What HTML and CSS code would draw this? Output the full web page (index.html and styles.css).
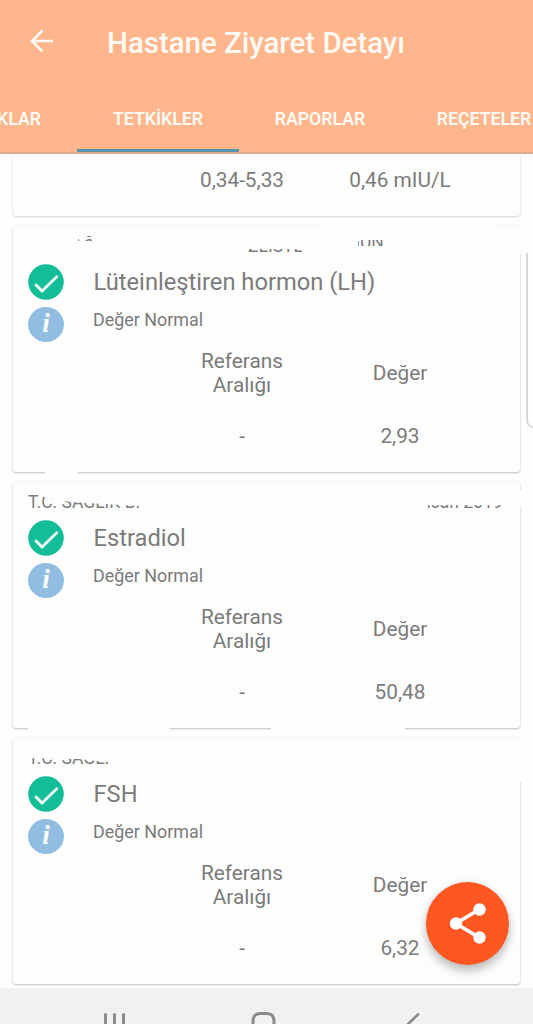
FILE: index.html
```html
<!DOCTYPE html>
<html lang="tr">
<head>
<meta charset="utf-8">
<title>Hastane Ziyaret Detayı</title>
<link rel="stylesheet" href="styles.css">
</head>
<body>
<div class="screen">
  <header class="appbar">
    <div class="toolbar">
      <svg class="back" viewBox="0 0 24 24" width="24" height="24"><path d="M24 12H3M13.500 1.500 3 12l10.500 10.500" fill="none" stroke="#fffaf3" stroke-width="2.700"/></svg>
      <h1 class="title">Hastane Ziyaret Detayı</h1>
    </div>
    <nav class="tabs">
      <span class="tab first">KLAR</span>
      <span class="tab active">TETKİKLER</span>
      <span class="tab">RAPORLAR</span>
      <span class="tab last">REÇETELER</span>
    </nav>
  </header>
  <main class="list">
    <section class="card partial">
      <div class="values"><span>0,34-5,33</span><span>0,46 mIU/L</span></div>
    </section>

    <section class="card lh">
      <div class="meta">
        <span class="frag frag-a">T.C. SAĞLIK</span><span class="frag frag-b">ZLISTL</span><span class="frag frag-c">GÜN</span>
      </div>
      <div class="result">
        <svg class="check" viewBox="0 0 36 36"><circle cx="18" cy="18" r="17.800"/><path d="M7.300 20.200 14 27 29.500 12"/></svg>
        <h2 class="name">Lüteinleştiren hormon (LH)</h2>
        <span class="info">i</span>
        <p class="status">Değer Normal</p>
      </div>
      <div class="heads"><span>Referans<br>Aralığı</span><span>Değer</span></div>
      <div class="values"><span>-</span><span>2,93</span></div>
      <i class="gap lh-top"></i><i class="gap lh-bottom"></i><i class="gap lh-side"></i>
    </section>

    <section class="card estradiol">
      <div class="meta">
        <span class="frag frag-d">T.C. SAĞLIK B.</span><span class="frag frag-e">Nisan 2019</span>
      </div>
      <div class="result">
        <svg class="check" viewBox="0 0 36 36"><circle cx="18" cy="18" r="17.800"/><path d="M7.300 20.200 14 27 29.500 12"/></svg>
        <h2 class="name">Estradiol</h2>
        <span class="info">i</span>
        <p class="status">Değer Normal</p>
      </div>
      <div class="heads"><span>Referans<br>Aralığı</span><span>Değer</span></div>
      <div class="values"><span>-</span><span>50,48</span></div>
      <i class="gap es-left"></i><i class="gap es-right"></i><i class="gap es-side"></i>
    </section>

    <section class="card fsh">
      <div class="meta">
        <span class="frag frag-f">T.C. SAĞLI</span>
      </div>
      <div class="result">
        <svg class="check" viewBox="0 0 36 36"><circle cx="18" cy="18" r="17.800"/><path d="M7.300 20.200 14 27 29.500 12"/></svg>
        <h2 class="name">FSH</h2>
        <span class="info">i</span>
        <p class="status">Değer Normal</p>
      </div>
      <div class="heads"><span>Referans<br>Aralığı</span><span>Değer</span></div>
      <div class="values"><span>-</span><span>6,32</span></div>
      <i class="gap fsh-side"></i>
    </section>
  </main>
  <footer class="navbar">
    <svg viewBox="0 0 533 36" width="533" height="36" fill="none" stroke="#8b8b8b" stroke-width="3" stroke-linecap="round"><path d="M105.500 26.500V40M114.500 26.500V40M123.500 26.500V40"/><path d="M253 40V33q0-7.500 7.500-7.500h6q7.500 0 7.500 7.500V40"/><path d="M418 26.500 404 40" stroke-width="2.600"/></svg>
  </footer>
  <div class="edge"></div>
  <div class="fab">
    <svg viewBox="0 0 83 83" width="83" height="83"><path d="M53 27.500 30 41.500l23 14" fill="none" stroke="#fff" stroke-width="3.600"/><g fill="#fff"><circle cx="53.500" cy="27.500" r="6.200"/><circle cx="30" cy="41.500" r="6.200"/><circle cx="53.500" cy="55.500" r="6.200"/></g></svg>
  </div>
</div>
</body>
</html>
```
FILE: styles.css
```css
* { box-sizing: border-box; margin: 0; padding: 0; }
body { font-family: Roboto, sans-serif; color: #7b7b7b; background: #fefefe; overflow: hidden; }
.screen { position: relative; width: 533px; height: 1024px; overflow: hidden; display: flex; flex-direction: column; }

.appbar { height: 154px; flex: none; background: #ffb68c; color: #fffaf3; border-bottom: 2px solid #dcaa8b; display: flex; flex-direction: column; }
.toolbar { height: 84px; display: flex; align-items: center; padding-left: 29px; gap: 54px; }
.title { font-size: 29.450px; font-weight: 500; line-height: 34px; white-space: nowrap; padding-top: 3px; }
.tabs { height: 70px; display: flex; margin-left: -85px; }
.tab { width: 162px; flex: none; text-align: center; font-size: 17.700px; font-weight: 600; line-height: 70px; height: 70px; padding-top: 2px; }
.tab.first { text-align: right; padding-right: 36px; }
.tab.last { padding-left: 4px; }
.tab.active { border-bottom: 3px solid #5594b1; }

.list { height: 834px; flex: none; padding: 0 13px; display: flex; flex-direction: column; gap: 10px; overflow: hidden; }
.card { position: relative; height: 246px; flex: none; background: #fdfdfd; border-radius: 3px; box-shadow: 0 1px 2px rgba(0,0,0,.22), 0 0 3px rgba(0,0,0,.08); }
.card.partial { height: 62px; padding-top: 10px; border-radius: 0 0 3px 3px; box-shadow: 0 1px 2px rgba(0,0,0,.12), 0 0 3px rgba(0,0,0,.1); }

.meta { height: 35px; padding-left: 15px; display: flex; font-size: 17.500px; line-height: 20px; white-space: nowrap; }
.frag { flex: none; height: 20px; }
.frag-a { width: 220px; margin-top: 10px; clip-path: polygon(50px 0, 64px 0, 64px 5px, 50px 5px); }
.frag-b { width: 100px; margin-top: 10px; clip-path: inset(13px 46px 0 0); }
.frag-c { margin-top: 6px; clip-path: inset(8px 0 6px 10px); }
.frag-d { margin-top: 10px; width: 386px; clip-path: polygon(0 0, 12px 0, 18px 7px, 32px 9px, 76px 12px, 112px 14px, 112px 20px, 0 20px); }
.frag-e { margin-top: 10px; clip-path: inset(13px 0 3px 14px); }
.frag-f { margin-top: 10px; clip-path: polygon(0 10px, 50px 11px, 90px 15px, 90px 20px, 0 20px); }

.result { display: grid; grid-template-columns: 65px 1fr; grid-template-rows: 42px 42px; align-items: center; padding-left: 15px; }
.check { width: 36px; height: 36px; }
.check circle { fill: #13bd97; }
.check path { fill: none; stroke: #f3fffb; stroke-width: 2.800; }
.name { font-size: 23.700px; font-weight: 400; line-height: 30px; white-space: nowrap; padding-left: 0.500px; }
.info { width: 36px; height: 35px; border-radius: 50%; background: #90bde1; color: #fff; font: italic bold 27px/33px "Liberation Serif", serif; text-align: center; }
.status { font-size: 17.900px; line-height: 22px; padding-bottom: 9px; }
.heads, .values { display: grid; grid-template-columns: 158px 158px; padding-left: 150px; align-items: center; text-align: center; font-size: 20.800px; line-height: 24px; }
.heads { padding-top: 4px; }
.values { padding-top: 27px; }
.partial .values { padding-top: 4px; }

.gap { position: absolute; background: #fefefe; }
.lh-top { left: 306px; width: 176px; top: -3px; height: 4px; }
.lh-bottom { left: 32px; width: 33px; bottom: -4px; height: 6px; }
.lh-side { right: -4px; width: 6px; top: -3px; height: 31px; }
.es-left { left: 15px; width: 143px; bottom: -4px; height: 5px; border-radius: 0 5px 0 0; }
.es-right { left: 258px; width: 134px; bottom: -4px; height: 5px; }
.es-side { right: -4px; width: 6px; top: 8px; height: 17px; }
.fsh-side { right: -4px; width: 6px; top: -3px; height: 47px; }

.navbar { height: 36px; flex: none; background: #f1f1f1; }
.navbar svg { display: block; }
.edge { position: absolute; left: 526px; top: 253px; width: 14px; height: 175px; border: 1px solid #c9c9c9; border-left-color: #d6d6d6; border-left-width: 2px; border-top: 0; border-radius: 0 0 0 8px; background: #fefefe; }
.fab { position: absolute; left: 426px; top: 882px; width: 83px; height: 83px; border-radius: 50%; background: #fe5722; box-shadow: 0 7px 10px rgba(0,0,0,.2), 0 1px 8px rgba(0,0,0,.1); }
.fab svg { display: block; }
```
